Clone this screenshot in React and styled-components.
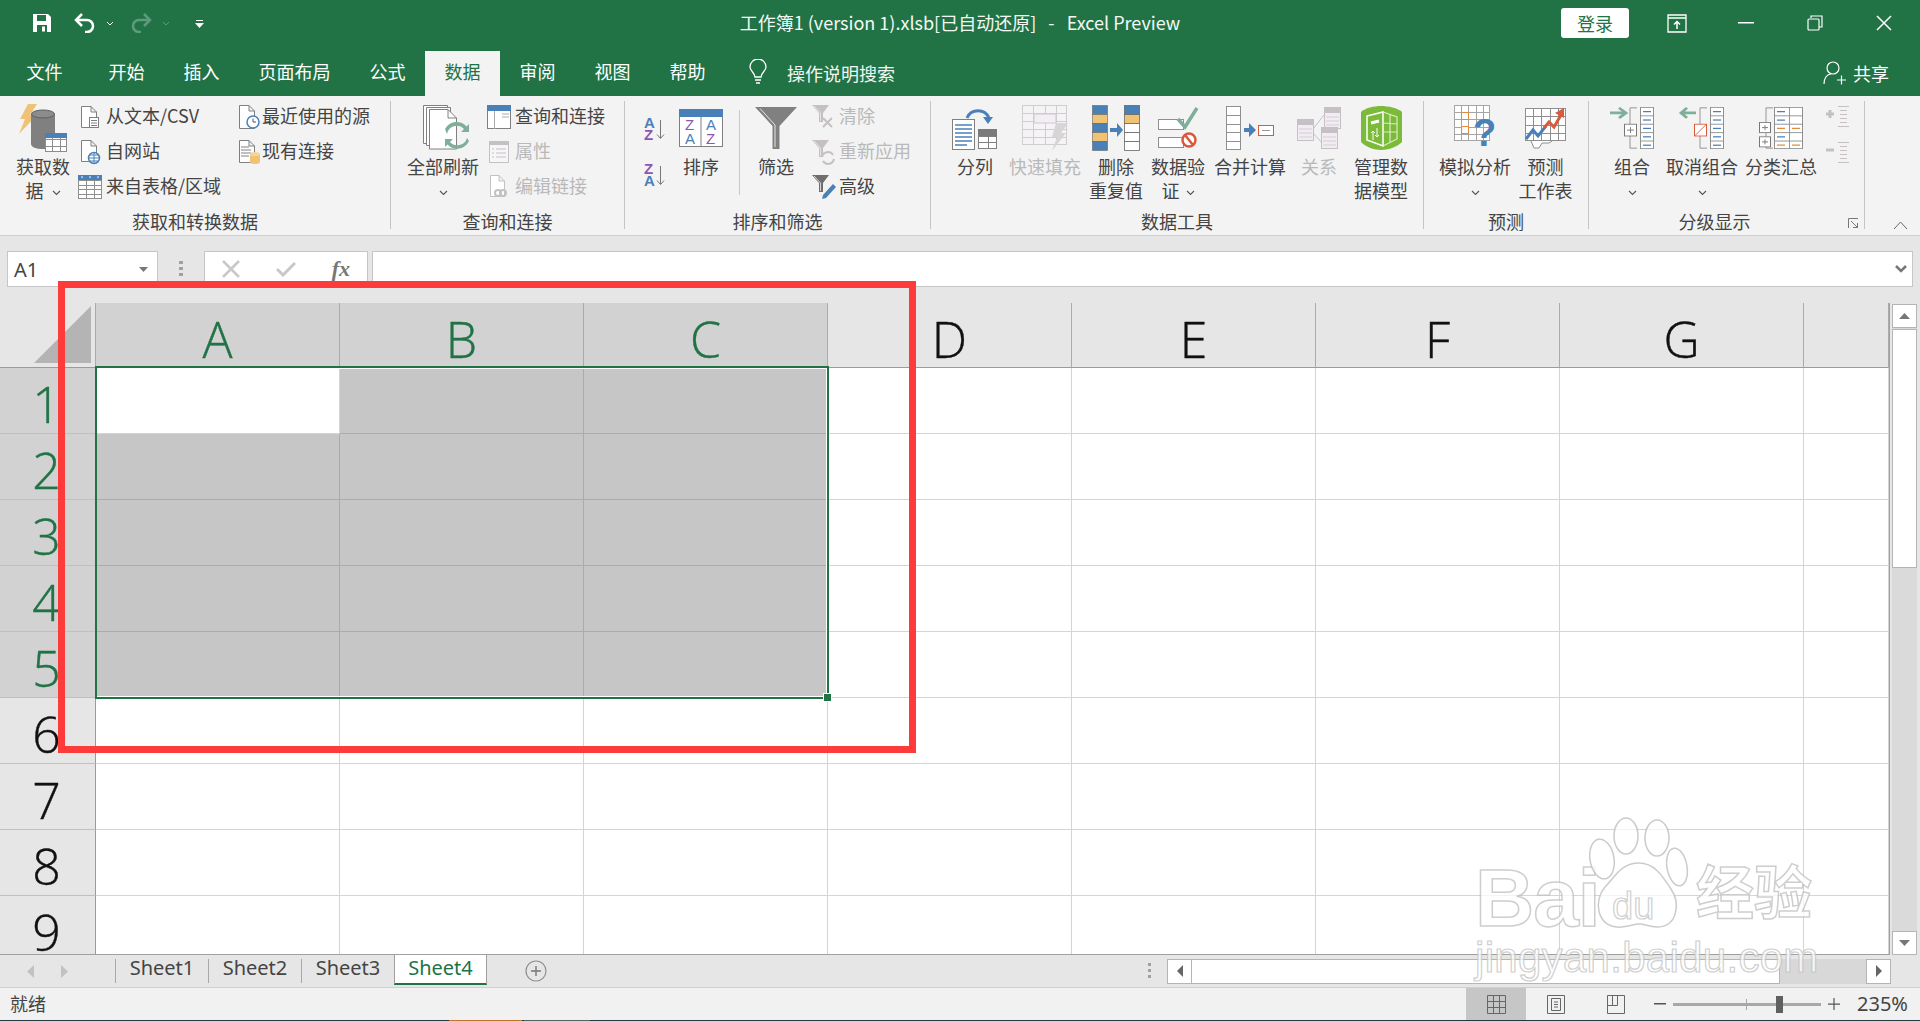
import React from "react";
import styled, { createGlobalStyle } from "styled-components";

const GlobalStyle = createGlobalStyle`
  html, body { margin: 0; padding: 0; height: 100%; overflow: hidden; }
  body { font-family: "Noto Sans CJK SC", "Noto Sans", sans-serif; }
  * { box-sizing: border-box; }
`;

const GREEN = "#217346";
const BLUE = "#4a80b8";
const TAN = "#efc275";
const PURPLE = "#8e55ad";
const TEAL = "#7fae9b";
const GRAY = "#808080";
const RED = "#d9593c";
const OFF = "#c4c0c4";

const AppWindow = styled.div`
  position: relative;
  width: 100vw;
  height: 100vh;
  overflow: hidden;
  display: flex;
  flex-direction: column;
  background: #e6e6e6;
`;

/* title bar */
const TitleBar = styled.div`
  height: 51px;
  padding-bottom: 5px;
  background: ${GREEN};
  display: grid;
  grid-template-columns: 1fr auto 1fr;
  align-items: center;
  color: #fff;
`;
const Quick = styled.div`
  display: flex;
  align-items: center;
  padding-left: 32px;
`;
const QuickGap = styled.span`
  display: inline-flex;
  margin-left: ${(p) => p.$m}px;
`;
const Title = styled.div`
  font-size: 18px;
  line-height: 26px;
  margin-top: -2px;
  white-space: pre;
  color: #f4f8f5;
`;
const WinButtons = styled.div`
  display: flex;
  align-items: center;
  justify-content: flex-end;
  padding-right: 2px;
`;
const Login = styled.div`
  width: 68px;
  height: 30px;
  background: #fff;
  border-radius: 3px;
  color: ${GREEN};
  font-size: 18px;
  line-height: 30px;
  text-align: center;
  margin-right: 13px;
`;
const WinBtn = styled.div`
  width: 69px;
  display: flex;
  justify-content: center;
`;

/* tabs */
const TabRow = styled.div`
  height: 45px;
  background: ${GREEN};
  display: flex;
  align-items: flex-end;
  padding-left: 7px;
`;
const Tab = styled.div`
  height: 45px;
  padding: 0 19.5px;
  margin-right: ${(p) => p.$mr || 0}px;
  font-size: 18px;
  line-height: 41px;
  color: ${(p) => (p.$active ? GREEN : "#fff")};
  background: ${(p) => (p.$active ? "#f3f3f3" : "transparent")};
  white-space: nowrap;
`;
const TellMe = styled.div`
  display: flex;
  align-items: center;
  height: 43px;
  margin-left: 23.5px;
  margin-bottom: 2px;
  color: #f2f6f3;
  font-size: 18px;
  gap: 20.5px;
`;
const Share = styled.div`
  margin-left: auto;
  padding-right: 31px;
  display: flex;
  align-items: center;
  height: 43px;
  margin-bottom: 2px;
  gap: 7px;
  color: #fff;
  font-size: 18px;
`;

/* ribbon */
const Ribbon = styled.div`
  position: relative;
  height: 140px;
  background: #f3f3f3;
  border-bottom: 1px solid #d0d0d0;
  display: flex;
  align-items: flex-start;
  padding-top: 5px;
  color: #444;
`;
const Group = styled.div`
  width: ${(p) => p.$w}px;
  height: 128px;
  border-right: 1px solid #c4c4c4;
  display: flex;
  flex-direction: column;
`;
const GroupBody = styled.div`
  height: 109px;
  display: flex;
  align-items: flex-start;
  padding-left: ${(p) => p.$pl || 0}px;
`;
const GroupLabel = styled.div`
  height: 19px;
  line-height: 22px;
  font-size: 18px;
  text-align: center;
  color: #444;
  padding-right: ${(p) => p.$pr || 0}px;
`;
const BigButton = styled.div`
  width: ${(p) => p.$w}px;
  margin-left: ${(p) => p.$ml || 0}px;
  flex: none;
  display: flex;
  flex-direction: column;
  align-items: center;
  color: ${(p) => (p.$off ? "#b9b9b9" : "#444")};
`;
const IconSlot = styled.div`
  height: 50px;
  margin-top: 2px;
  padding-left: ${(p) => p.$pl || 0}px;
  display: flex;
  align-items: center;
  justify-content: center;
`;
const BigText = styled.div`
  margin-top: 0.5px;
  font-size: 18px;
  line-height: 24px;
  text-align: center;
  white-space: nowrap;
`;
const Chevron = styled.span`
  display: inline-flex;
  vertical-align: middle;
  margin-left: ${(p) => p.$ml || 0}px;
`;
const SmallCol = styled.div`
  width: ${(p) => (p.$w ? `${p.$w}px` : "auto")};
  margin-left: ${(p) => p.$ml || 0}px;
  margin-top: -2px;
  display: flex;
  flex-direction: column;
  flex: none;
`;
const SmallRow = styled.div`
  height: 35px;
  display: flex;
  align-items: center;
  font-size: 18px;
  line-height: 32px;
  padding-bottom: 3px;
  white-space: nowrap;
  color: ${(p) => (p.$off ? "#b9b9b9" : "#444")};
`;
const SmallIcon = styled.span`
  width: ${(p) => p.$w || 24}px;
  margin-right: ${(p) => (p.$mr === undefined ? 4 : p.$mr)}px;
  margin-top: 3px;
  display: flex;
  justify-content: center;
`;
const SortCol = styled.div`
  width: 21px;
  margin-top: 16px;
  display: flex;
  flex-direction: column;
  gap: 22px;
  flex: none;
`;
const InnerSep = styled.div`
  width: 1px;
  height: 85px;
  margin: 9px 0 0 ${(p) => p.$ml}px;
  background: #c9c9c9;
  flex: none;
`;
const TinyCol = styled.div`
  margin: 5px 0 0 ${(p) => p.$ml}px;
  display: flex;
  flex-direction: column;
  gap: 15px;
  flex: none;
`;
const Launcher = styled.span`
  position: absolute;
  left: 1848px;
  top: 122px;
  display: flex;
`;
const Collapse = styled.span`
  position: absolute;
  left: 1893px;
  top: 125px;
  display: flex;
`;

/* formula bar */
const FormulaBar = styled.div`
  height: 67px;
  padding: 15px 7px 0 7px;
  display: flex;
  align-items: flex-start;
  background: #e6e6e6;
`;
const NameBox = styled.div`
  width: 151px;
  height: 36px;
  background: #fff;
  border: 1px solid #c6c6c6;
  display: flex;
  align-items: center;
  justify-content: space-between;
  padding: 0 9px 0 6px;
  font-size: 20px;
  font-family: "Noto Sans", sans-serif;
  color: #444;
`;
const Dots = styled.div`
  width: 46px;
  height: 36px;
  display: flex;
  justify-content: center;
  align-items: center;
`;
const FxBox = styled.div`
  width: 164px;
  height: 36px;
  background: #fff;
  border: 1px solid #c6c6c6;
  display: flex;
  align-items: center;
  justify-content: space-between;
  padding: 0 17px;
`;
const FxLabel = styled.span`
  font-family: "Liberation Serif", serif;
  font-style: italic;
  font-weight: 700;
  font-size: 22px;
  color: #777;
`;
const FormulaInput = styled.div`
  flex: 1;
  height: 36px;
  margin-left: 4px;
  background: #fff;
  border: 1px solid #c6c6c6;
  display: flex;
  align-items: center;
  justify-content: flex-end;
  padding-right: 5px;
`;

/* sheet */
const SheetRow = styled.div`
  height: 652px;
  display: flex;
`;
const SheetWrap = styled.div`
  position: relative;
  width: 1890px;
  height: 652px;
  overflow: hidden;
  border-right: 1px solid #a0a0a0;
  border-bottom: 1px solid #a0a0a0;
`;
const SheetGrid = styled.div`
  display: grid;
  grid-template-columns: 96px repeat(7, 244px) 1fr;
  grid-template-rows: 65px repeat(9, 66px);
`;
const Corner = styled.div`
  position: relative;
  border-right: 1px solid #ababab;
  border-bottom: 1px solid #9b9b9b;
  &::after {
    content: "";
    position: absolute;
    right: 4px;
    bottom: 4px;
    width: 0;
    height: 0;
    border-left: 57px solid transparent;
    border-bottom: 57px solid #b4b4b4;
  }
`;
const ColHead = styled.div`
  background: ${(p) => (p.$sel ? "#d2d2d2" : "#e6e6e6")};
  border-right: 1px solid #ababab;
  border-bottom: 1px solid #9b9b9b;
  color: ${(p) => (p.$sel ? GREEN : "#111")};
  font-family: "Open Sans", sans-serif;
  font-weight: 300;
  font-size: 50px;
  line-height: 72px;
  text-align: center;
  -webkit-text-stroke: 0.4px currentColor;
`;
const RowHead = styled.div`
  background: ${(p) => (p.$sel ? "#d2d2d2" : "#e6e6e6")};
  border-right: 1px solid #9b9b9b;
  border-bottom: 1px solid #c0c0c0;
  color: ${(p) => (p.$sel ? GREEN : "#111")};
  font-family: "Open Sans", sans-serif;
  font-weight: 300;
  font-size: 50px;
  line-height: 72px;
  text-align: center;
  padding-right: 2px;
  -webkit-text-stroke: 0.4px currentColor;
`;
const Cell = styled.div`
  background: ${(p) => (p.$sel ? "#c6c6c6" : "#fff")};
  border-right: 1px solid ${(p) => (p.$sel ? "#ababab" : "#d4d4d4")};
  border-bottom: 1px solid ${(p) => (p.$sel ? "#ababab" : "#d4d4d4")};
`;
const Selection = styled.div`
  position: absolute;
  left: 95px;
  top: 63px;
  width: 734px;
  height: 333px;
  border: 2px solid ${GREEN};
  box-shadow: inset -1px -1px 0 #fff, inset 0 1px 0 #fff;
`;
const Handle = styled.div`
  position: absolute;
  right: -5px;
  bottom: -5px;
  width: 9px;
  height: 9px;
  background: ${GREEN};
  border: 1px solid #fff;
`;
const VScroll = styled.div`
  flex: 1;
  padding: 1px 3px 0 2px;
  display: flex;
  flex-direction: column;
`;
const ScrollBtn = styled.div`
  height: 24px;
  background: #fff;
  border: 1px solid #b5b5b5;
  display: flex;
  align-items: center;
  justify-content: center;
  flex: none;
`;
const VTrack = styled.div`
  flex: 1;
  background: #dadada;
  padding-top: 1px;
`;
const VThumb = styled.div`
  height: 239px;
  background: #fff;
  border: 1px solid #b5b5b5;
`;

/* sheet tabs */
const TabsBar = styled.div`
  height: 33px;
  display: flex;
  align-items: flex-start;
  border-bottom: 1px solid #cfcfcf;
  background: #e6e6e6;
`;
const TabNav = styled.div`
  width: 115px;
  height: 32px;
  padding-left: 27px;
  display: flex;
  align-items: center;
  gap: 27px;
`;
const SheetTab = styled.div`
  width: ${(p) => p.$w}px;
  height: ${(p) => (p.$active ? 30 : 24)}px;
  margin-top: ${(p) => (p.$active ? 0 : 4)}px;
  font-family: "Noto Sans", sans-serif;
  font-size: 20px;
  line-height: ${(p) => (p.$active ? 26 : 18)}px;
  text-align: center;
  color: ${(p) => (p.$active ? GREEN : "#444")};
  background: ${(p) => (p.$active ? "#fff" : "transparent")};
  border-left: ${(p) => (p.$active ? "1px solid #a0a0a0" : "1px solid #a8a8a8")};
  border-right: ${(p) => (p.$active ? "1px solid #a0a0a0" : "none")};
  border-bottom: ${(p) => (p.$active ? `2px solid ${GREEN}` : "none")};
`;
const AddSheet = styled.div`
  margin: 5px 0 0 38px;
  display: flex;
`;
const HScrollWrap = styled.div`
  margin-left: auto;
  display: flex;
  align-items: center;
  height: 26px;
  margin-top: 3px;
  margin-right: 29px;
`;
const HDots = styled.div`
  margin-right: 16px;
  display: flex;
`;
const HBtn = styled.div`
  width: 25px;
  height: 25px;
  background: #fff;
  border: 1px solid #b5b5b5;
  display: flex;
  align-items: center;
  justify-content: center;
`;
const HTrack = styled.div`
  width: 674px;
  height: 25px;
  background: #d8d8d8;
`;
const HThumb = styled.div`
  width: 588px;
  height: 25px;
  background: #fff;
  border: 1px solid #b5b5b5;
  border-left: none;
`;

/* status bar */
const StatusBar = styled.div`
  flex: 1;
  display: flex;
  align-items: stretch;
  background: #f1f1f1;
  color: #444;
  font-size: 18px;
  line-height: 30px;
  padding-left: 10px;
`;
const ViewBtn = styled.div`
  width: 60px;
  display: flex;
  align-items: center;
  justify-content: center;
  background: ${(p) => (p.$active ? "#c6c6c6" : "transparent")};
`;
const Views = styled.div`
  margin-left: auto;
  display: flex;
`;
const Zoomer = styled.div`
  display: flex;
  align-items: center;
  margin-left: 8px;
  margin-right: 12px;
`;
const SliderTrack = styled.div`
  position: relative;
  width: 148px;
  height: 3px;
  margin: 0 7px;
  background: #a8a8a8;
`;
const SliderTick = styled.div`
  position: absolute;
  left: 73px;
  top: -4px;
  width: 1px;
  height: 11px;
  background: #a8a8a8;
`;
const SliderThumb = styled.div`
  position: absolute;
  left: 103px;
  top: -7px;
  width: 7px;
  height: 17px;
  background: #5f5f5f;
`;
const Percent = styled.span`
  margin-left: 17px;
  font-family: "Noto Sans", sans-serif;
  font-size: 20px;
  color: #444;
`;
const TaskStrip = styled.div`
  height: 1px;
  flex: none;
  display: flex;
  background: #1f3a44;
`;
const TaskSeg = styled.div`
  width: ${(p) => p.$w}px;
  margin-left: ${(p) => p.$ml}px;
  background: ${(p) => p.$c};
`;

/* overlays */
const RedFrame = styled.div`
  position: absolute;
  left: 58px;
  top: 281px;
  width: 858px;
  height: 472px;
  border: 7px solid #fd3b3b;
  pointer-events: none;
`;
const Watermark = styled.div`
  position: absolute;
  left: 1475px;
  top: 815px;
  width: 345px;
  height: 170px;
  pointer-events: none;
`;
const WmBig = styled.span`
  position: absolute;
  left: ${(p) => p.$x}px;
  top: ${(p) => p.$y}px;
  font-family: "Liberation Sans", "Noto Sans CJK SC", sans-serif;
  font-weight: 700;
  font-size: ${(p) => p.$s}px;
  line-height: 1;
  letter-spacing: ${(p) => p.$ls || 0}px;
  white-space: nowrap;
  color: rgba(255, 255, 255, 0.72);
  -webkit-text-stroke: 1.5px rgba(190, 190, 190, 0.75);
`;
const WmThin = styled(WmBig)`
  font-weight: 400;
  -webkit-text-stroke: 1.2px rgba(190, 190, 190, 0.75);
`;
const WmPaw = styled.svg`
  position: absolute;
  left: 114px;
  top: 2px;
`;

/* icon drawing helpers */
const Ico = ({ w, h, vh, children }) => (
  <svg width={w} height={h} viewBox={`0 0 ${w} ${vh || h}`} preserveAspectRatio="none" fill="none" overflow="visible">
    {children}
  </svg>
);

const Page = ({ x = 0, y = 0, w = 16, h = 21, c = GRAY, fill = "#fff" }) => (
  <path
    d={`M${x + 0.5} ${y + 0.5}H${x + w - 6}L${x + w - 0.5} ${y + 6}V${y + h - 0.5}H${x + 0.5}ZM${x + w - 6} ${y + 0.5}V${y + 6}H${x + w - 0.5}`}
    fill={fill}
    stroke={c}
  />
);

const Grid = ({ x = 0, y = 0, w, h, cols, rows, c = GRAY, fill = "#fff", head }) => {
  const lines = [];
  for (let i = 1; i < cols; i++) {
    const px = x + Math.round((w * i) / cols) + 0.5;
    lines.push(`M${px} ${y}V${y + h}`);
  }
  for (let i = 1; i < rows; i++) {
    const py = y + Math.round((h * i) / rows) + 0.5;
    lines.push(`M${x} ${py}H${x + w}`);
  }
  return (
    <>
      <rect x={x + 0.5} y={y + 0.5} width={w - 1} height={h - 1} fill={fill} stroke={c} />
      <path d={lines.join("")} stroke={c} />
      {head && <rect x={x} y={y} width={w} height={Math.round(h / rows)} fill={head} />}
    </>
  );
};

const SmallChev = ({ ml }) => (
  <Chevron $ml={ml}>
    <svg width="9" height="6" viewBox="0 0 9 6" fill="none">
      <path d="M1 1l3.5 3.5L8 1" stroke="#555" strokeWidth="1.1" />
    </svg>
  </Chevron>
);

const IconGetData = () => (
  <Ico w={48} h={48}>
    <path d="M9 0h9l-7 11h7L0 30l6-15H1z" fill={TAN} />
    <path d="M12 10v30c0 3 5 5 12 5s12-2 12-5V10z" fill={GRAY} />
    <ellipse cx="24" cy="10" rx="11.5" ry="4" fill="#8c8c8c" stroke="#5f5f5f" />
    <Grid x={26} y={29} w={22} h={19} cols={3} rows={3} c="#8c8c8c" />
    <rect x="26" y="29" width="22" height="5" fill={BLUE} />
  </Ico>
);
const IconFromText = () => (
  <Ico w={24} h={22}>
    <Page x={3} y={0} w={16} h={22} />
    <rect x="11.5" y="11.5" width="9" height="10" fill="#fff" stroke={GRAY} />
    <path d="M13 14.5h6M13 17h6M13 19.5h6" stroke={GRAY} />
  </Ico>
);
const IconWeb = () => (
  <Ico w={24} h={24}>
    <Page x={3} y={0} w={16} h={22} />
    <circle cx="16" cy="18" r="5.5" fill="#fff" stroke={BLUE} strokeWidth="1.5" />
    <path d="M10.5 18h11M16 12.5v11M12 15h8M12 21h8" stroke={BLUE} />
  </Ico>
);
const IconTable = () => (
  <Ico w={24} h={24}>
    <Grid x={0} y={0} w={24} h={24} cols={3} rows={5} c="#8f8f8f" />
    <rect width="24" height="5" fill={BLUE} />
    <path d="M3 1.5l1 2 1-2zM11 1.5l1 2 1-2zM19 1.5l1 2 1-2z" fill="#fff" />
  </Ico>
);
const IconRecent = () => (
  <Ico w={24} h={24}>
    <Page x={1} y={0} w={16} h={24} />
    <circle cx="15" cy="17" r="6" fill="#fff" stroke={BLUE} strokeWidth="1.5" />
    <path d="M15 13.5V17h3" stroke="#555" />
  </Ico>
);
const IconExisting = () => (
  <Ico w={24} h={24}>
    <Page x={1} y={0} w={16} h={23} />
    <path d="M3 7h8M3 10h10M3 13h10M3 16h8" stroke={GRAY} />
    <path d="M12 14v8c0 1 2 2 5 2s5-1 5-2v-8z" fill={TAN} />
    <ellipse cx="17" cy="14" rx="5" ry="2" fill="#f4d69c" />
  </Ico>
);
const IconRefreshAll = () => (
  <Ico w={46} h={46}>
    <path d="M.5 .5h24v38H.5z" fill="#fff" stroke={GRAY} />
    <path d="M3.5 2.5h24v38h-24z" fill="#fff" stroke={GRAY} />
    <path d="M6.5 4.5H25L33.5 13v31h-27z" fill="#fff" stroke={GRAY} />
    <path d="M25 4.5V13h8.5" stroke={GRAY} />
    <path d="M24 29a10 10 0 0 1 17-5l-3 3h8v-8l-2.500 2.500A13 13 0 0 0 22 24z" fill={TEAL} />
    <path d="M44 33a10 10 0 0 1-17 4l3-3h-8v8l2.500-2.500A13 13 0 0 0 46 36z" fill={TEAL} />
  </Ico>
);
const IconWindow = () => (
  <Ico w={24} h={24}>
    <rect x=".5" y=".5" width="23" height="23" fill="#fff" stroke={GRAY} />
    <rect width="24" height="6" fill={BLUE} />
    <path d="M7.500 6v18M15 9h7M15 12h7" stroke="#aaa" />
  </Ico>
);
const IconProps = () => (
  <Ico w={20} h={22}>
    <rect x=".5" y=".5" width="19" height="21" fill="#f6f6f6" stroke={OFF} />
    <rect width="20" height="4" fill={OFF} />
    <path d="M3 8h2M3 12h2M3 16h2M7 8h10M7 12h10M7 16h10" stroke={OFF} />
  </Ico>
);
const IconEditLinks = () => (
  <Ico w={20} h={24}>
    <Page x={1} y={0} w={15} h={22} c={OFF} />
    <circle cx="9" cy="18" r="3" fill="none" stroke={OFF} strokeWidth="2" />
    <circle cx="14" cy="18" r="3" fill="none" stroke={OFF} strokeWidth="2" />
  </Ico>
);
const SortLetters = ({ top, bottom, tc, bc }) => (
  <Ico w={21} h={24}>
    <text x="0" y="11" fontSize="15" fontWeight="700" fontFamily="Liberation Sans" fill={tc}>{top}</text>
    <text x="0" y="23" fontSize="15" fontWeight="700" fontFamily="Liberation Sans" fill={bc}>{bottom}</text>
    <path d="M16.500 3v18M13 17.500l3.500 4 3.500-4" stroke="#777" />
  </Ico>
);
const IconSort = () => (
  <Ico w={44} h={38}>
    <rect x=".5" y=".5" width="43" height="37" fill="#fff" stroke={GRAY} />
    <rect width="44" height="8" fill={BLUE} />
    <path d="M22 8v30" stroke={GRAY} />
    <text x="6" y="21" fontSize="15" fontFamily="Liberation Sans" fill={PURPLE}>Z</text>
    <text x="6" y="35" fontSize="15" fontFamily="Liberation Sans" fill={BLUE}>A</text>
    <text x="27" y="21" fontSize="15" fontFamily="Liberation Sans" fill={BLUE}>A</text>
    <text x="27" y="35" fontSize="15" fontFamily="Liberation Sans" fill={PURPLE}>Z</text>
  </Ico>
);
const IconFunnel = () => (
  <Ico w={42} h={42}>
    <path d="M0 0h42L24.500 19v23h-7V19z" fill={GRAY} />
    <path d="M5 1.500L20 18v22" stroke="#e6e6e6" strokeWidth="1" />
  </Ico>
);
const TinyFunnel = ({ c, children }) => (
  <Ico w={24} h={24}>
    <path d="M0 0h17L11 8v9H7V8z" fill={c} />
    <path d="M2 1l6.500 7v8" stroke="#eee" strokeWidth=".8" />
    {children}
  </Ico>
);
const IconClear = () => (
  <TinyFunnel c={OFF}>
    <path d="M11 13l9 9M20 13l-9 9" stroke={OFF} strokeWidth="2" />
  </TinyFunnel>
);
const IconReapply = () => (
  <TinyFunnel c={OFF}>
    <path d="M10 17a6 6 0 0 1 11-2M22 19a6 6 0 0 1-11 2" stroke={OFF} strokeWidth="2" />
  </TinyFunnel>
);
const IconAdvanced = () => (
  <TinyFunnel c="#6f6f6f">
    <path d="M21 9l3 3-10 11-4 1 1-4z" fill={BLUE} />
  </TinyFunnel>
);
const IconTextToCols = () => (
  <Ico w={46} h={46}>
    <path d="M15 13a12 12 0 0 1 22 0" stroke={BLUE} strokeWidth="3" />
    <path d="M31 12h10l-5 7z" fill={BLUE} />
    <rect x=".5" y="14.500" width="22" height="30" fill="#fff" stroke={GRAY} />
    <path d="M3 20h17M3 24h17M3 28h17M3 32h17M3 36h17M3 40h12" stroke={BLUE} strokeWidth="1.4" />
    <Grid x={26} y={24} w={19} h={20} cols={2} rows={3} c={GRAY} />
    <rect x="26" y="24" width="19" height="7" fill="#7b7b7b" />
  </Ico>
);
const IconFlash = () => (
  <Ico w={46} h={46}>
    <Grid x={0} y={0} w={45} h={40} cols={4} rows={5} c="#d0ccd0" fill="#f6f3f6" />
    <rect x="12" y="9" width="22" height="9" fill="#f3eef3" stroke="#cdc8cd" />
    <path d="M34 18h12l-7 10h5L30 46l5-14h-5z" fill="#d6d6d6" />
  </Ico>
);
const IconDupes = () => {
  const cols = [BLUE, TAN, BLUE, TAN, BLUE];
  const right = [BLUE, TAN, "#fff", "#fff", "#fff"];
  return (
    <Ico w={48} h={46}>
      {cols.map((c, i) => (
        <rect key={i} x="0.500" y={i * 9 + 0.5} width="15" height="9" fill={c} stroke="#666" strokeWidth=".6" />
      ))}
      {right.map((c, i) => (
        <rect key={i} x="32.500" y={i * 9 + 0.5} width="15" height="9" fill={c} stroke="#666" strokeWidth=".8" />
      ))}
      <path d="M18 23h7v-5l6 7-6 7v-5h-7z" fill={BLUE} />
    </Ico>
  );
};
const IconValidate = () => (
  <Ico w={41} h={42}>
    <rect x=".5" y="12.500" width="25" height="10" fill="#fff" stroke="#8f8f8f" />
    <rect x=".5" y="30.500" width="25" height="10" fill="#fff" stroke="#8f8f8f" />
    <path d="M20 12l7 8L39 1" stroke={TEAL} strokeWidth="3.500" />
    <circle cx="31" cy="33" r="6.500" fill="#fff" stroke={RED} strokeWidth="2.500" />
    <path d="M27 28l8 10" stroke={RED} strokeWidth="2.500" />
  </Ico>
);
const IconConsolidate = () => (
  <Ico w={48} h={44}>
    <Grid x={0} y={0} w={15} h={44} cols={1} rows={5} c="#8f8f8f" />
    <path d="M18 22h5v-5l7 7-7 7v-5h-5z" fill={BLUE} />
    <rect x="32.500" y="19.500" width="15" height="10" fill="#fff" stroke={RED} />
    <path d="M36 24.500h8" stroke="#999" />
  </Ico>
);
const SmallTable = ({ x, y }) => (
  <>
    <rect x={x + 0.5} y={y + 0.5} width="16" height="21" fill="#f1ecf1" stroke={OFF} />
    <rect x={x} y={y} width="17" height="6" fill={OFF} />
    <path d={`M${x + 2} ${y + 10}h13M${x + 2} ${y + 14}h13M${x + 2} ${y + 18}h13`} stroke="#d5cfd5" />
  </>
);
const IconRelations = () => (
  <Ico w={44} h={42}>
    <path d="M16 22L27 8M16 26l10 11" stroke={OFF} />
    <SmallTable x={0} y={12} />
    <SmallTable x={27} y={0} />
    <SmallTable x={24} y={20} />
  </Ico>
);
const IconModel = () => (
  <Ico w={41} h={44}>
    <path d="M0 6c4-4 13-6 20-6s17 2 21 6v30c-4 4-12 8-21 8S4 40 0 36z" fill="#7cbb39" />
    <path d="M6 10l16-4v34L6 34z" fill="none" stroke="#fff" strokeWidth="1.500" />
    <path d="M22 6l14 5v22l-14 7M22 17l14 1M22 26l14 0M29 9v27" stroke="#d9ecc4" strokeWidth="1.200" />
    <path d="M10 17l8-2" stroke="#fff" strokeWidth="3" />
    <path d="M12 34v-9l-2 2M12 25l2 2M16 22v9l2-2M16 31l-2-2" stroke="#fff" />
  </Ico>
);
const IconWhatIf = () => (
  <Ico w={43} h={46}>
    <Grid x={0} y={0} w={36} h={36} cols={5} rows={5} c="#a5a5a5" />
    <rect x="7.500" y="7.500" width="7" height="7" fill="#fff" stroke="#e38a3c" />
    <rect x="7.500" y="21.500" width="7" height="7" fill="#fff" stroke="#e38a3c" />
    <text x="19" y="41" fontSize="38" fontWeight="700" fontFamily="Liberation Sans" fill={BLUE}>?</text>
  </Ico>
);
const IconForecast = () => (
  <Ico w={41} h={42}>
    <Grid x={0} y={1} w={41} h={33} cols={5} rows={4} c="#8f8f8f" />
    <path d="M6 34l3 7h5l3-5h7l3-2" stroke="#8f8f8f" fill="#fff" />
    <path d="M1 32l7-9 5 6 8-10" stroke={BLUE} strokeWidth="3" />
    <path d="M19 21l5-6 5 5 7-12" stroke={RED} strokeWidth="3" />
    <path d="M30 6l9-5v10z" fill={RED} />
  </Ico>
);
const OutlineList = ({ x, dash = BLUE }) => (
  <>
    <Grid x={x} y={0} w={14} h={50} cols={1} rows={5} c="#8f8f8f" />
    {[0, 1, 2, 3, 4].map((i) => (
      <path key={i} d={`M${x + 3} ${i * 10 + 5.5}h8`} stroke={dash} strokeWidth="1.500" />
    ))}
  </>
);
const IconGroup = () => (
  <Ico w={44} h={42} vh={50}>
    <path d="M0 7h15M9 1l7 6-7 6" stroke={TEAL} strokeWidth="3" />
    <path d="M27 1h-7v48h7" stroke="#8f8f8f" />
    <rect x="14.500" y="20.500" width="12" height="14" fill="#fff" stroke="#777" />
    <path d="M17 27.500h7M20.500 24v7" stroke="#777" />
    <OutlineList x={30} />
  </Ico>
);
const IconUngroup = () => (
  <Ico w={44} h={42} vh={50}>
    <path d="M16 7H1M7 1L1 7l6 6" stroke={TEAL} strokeWidth="3" />
    <path d="M27 1h-7v48h7" stroke="#8f8f8f" />
    <rect x="14.500" y="20.500" width="12" height="14" fill="#fff" stroke={RED} />
    <path d="M15 34l11-13" stroke={RED} />
    <OutlineList x={30} />
  </Ico>
);
const IconSubtotal = () => (
  <Ico w={44} h={42} vh={50}>
    <path d="M14 1H7v48h7" stroke="#8f8f8f" />
    <rect x=".5" y="18.500" width="11" height="12" fill="#fff" stroke="#777" />
    <path d="M3 24.500h6M6 21.500v6" stroke="#777" />
    <rect x=".5" y="35.500" width="11" height="12" fill="#fff" stroke="#777" />
    <path d="M3 41.500h6M6 38.500v6" stroke="#777" />
    <Grid x={15} y={0} w={29} h={50} cols={2} rows={5} c="#8f8f8f" />
    <path d="M18 5.500h8M18 15.500h8M18 35.500h8" stroke={BLUE} strokeWidth="1.500" />
    <path d="M18 25.500h8M33 25.500h8M18 45.500h8M33 45.500h8" stroke="#e38a3c" strokeWidth="1.500" />
  </Ico>
);
const IconShowDetail = ({ minus }) => (
  <Ico w={23} h={21}>
    <path d="M0 8h8" stroke={OFF} strokeWidth="3" />
    {!minus && <path d="M4 4v8" stroke={OFF} strokeWidth="3" />}
    <path d="M12 .5h11M14 4.500h7M14 8.500h7M14 12.500h7M14 16.500h7M12 20.500h11" stroke={OFF} />
  </Ico>
);

const dataTools = [
  { w: 70, icon: <IconTextToCols />, text: ["分列"] },
  { w: 70, off: true, icon: <IconFlash />, text: ["快速填充"] },
  { w: 72, icon: <IconDupes />, text: ["删除", "重复值"] },
  { w: 52, icon: <IconValidate />, text: ["数据验", "证"], chev: true },
  { w: 92, icon: <IconConsolidate />, text: ["合并计算"] },
  { w: 46, off: true, icon: <IconRelations />, text: ["关系"] },
  { w: 78, icon: <IconModel />, text: ["管理数", "据模型"] },
];

const columns = ["A", "B", "C", "D", "E", "F", "G", ""];
const rowNumbers = [1, 2, 3, 4, 5, 6, 7, 8, 9];

const isSelected = (r, c) => r <= 5 && c <= 2 && !(r === 1 && c === 0);

const Sheet = () => (
  <SheetWrap>
    <SheetGrid>
      <Corner />
      {columns.map((c, i) => (
        <ColHead key={i} $sel={i < 3}>
          {c}
        </ColHead>
      ))}
      {rowNumbers.map((r) => (
        <React.Fragment key={r}>
          <RowHead $sel={r <= 5}>{r}</RowHead>
          {columns.map((c, i) => (
            <Cell key={i} $sel={isSelected(r, i)} />
          ))}
        </React.Fragment>
      ))}
    </SheetGrid>
    <Selection>
      <Handle />
    </Selection>
  </SheetWrap>
);

const Ribbons = () => (
  <Ribbon>
    <Group $w={391}>
      <GroupBody $pl={16}>
        <BigButton $w={54}>
          <IconSlot>
            <IconGetData />
          </IconSlot>
          <BigText>
            获取数
            <br />据<SmallChev ml={8} />
          </BigText>
        </BigButton>
        <SmallCol $ml={8} $w={160}>
          <SmallRow><SmallIcon><IconFromText /></SmallIcon>从文本/CSV</SmallRow>
          <SmallRow><SmallIcon><IconWeb /></SmallIcon>自网站</SmallRow>
          <SmallRow><SmallIcon><IconTable /></SmallIcon>来自表格/区域</SmallRow>
        </SmallCol>
        <SmallCol>
          <SmallRow><SmallIcon $mr={0}><IconRecent /></SmallIcon>最近使用的源</SmallRow>
          <SmallRow><SmallIcon $mr={0}><IconExisting /></SmallIcon>现有连接</SmallRow>
        </SmallCol>
      </GroupBody>
      <GroupLabel>获取和转换数据</GroupLabel>
    </Group>

    <Group $w={234}>
      <GroupBody $pl={16}>
        <BigButton $w={72}>
          <IconSlot $pl={5}>
            <IconRefreshAll />
          </IconSlot>
          <BigText>
            全部刷新
            <br />
            <SmallChev />
          </BigText>
        </BigButton>
        <SmallCol $ml={8}>
          <SmallRow><SmallIcon><IconWindow /></SmallIcon>查询和连接</SmallRow>
          <SmallRow $off><SmallIcon><IconProps /></SmallIcon>属性</SmallRow>
          <SmallRow $off><SmallIcon><IconEditLinks /></SmallIcon>编辑链接</SmallRow>
        </SmallCol>
      </GroupBody>
      <GroupLabel>查询和连接</GroupLabel>
    </Group>

    <Group $w={306}>
      <GroupBody $pl={19}>
        <SortCol>
          <SortLetters top="A" bottom="Z" tc={BLUE} bc={PURPLE} />
          <SortLetters top="Z" bottom="A" tc={PURPLE} bc={BLUE} />
        </SortCol>
        <BigButton $w={54} $ml={9}>
          <IconSlot>
            <IconSort />
          </IconSlot>
          <BigText>排序</BigText>
        </BigButton>
        <InnerSep $ml={11} />
        <BigButton $w={60} $ml={6}>
          <IconSlot>
            <IconFunnel />
          </IconSlot>
          <BigText>筛选</BigText>
        </BigButton>
        <SmallCol $ml={6}>
          <SmallRow $off><SmallIcon $mr={3}><IconClear /></SmallIcon>清除</SmallRow>
          <SmallRow $off><SmallIcon $mr={3}><IconReapply /></SmallIcon>重新应用</SmallRow>
          <SmallRow><SmallIcon $mr={3}><IconAdvanced /></SmallIcon>高级</SmallRow>
        </SmallCol>
      </GroupBody>
      <GroupLabel>排序和筛选</GroupLabel>
    </Group>

    <Group $w={493}>
      <GroupBody $pl={9}>
        {dataTools.map((b) => (
          <BigButton key={b.text[0]} $w={b.w} $off={b.off}>
            <IconSlot>{b.icon}</IconSlot>
            <BigText>
              {b.text[0]}
              {b.text[1] && <br />}
              {b.text[1]}
              {b.chev && <SmallChev ml={6} />}
            </BigText>
          </BigButton>
        ))}
      </GroupBody>
      <GroupLabel>数据工具</GroupLabel>
    </Group>

    <Group $w={165}>
      <GroupBody $pl={16}>
        <BigButton $w={70}>
          <IconSlot>
            <IconWhatIf />
          </IconSlot>
          <BigText>
            模拟分析
            <br />
            <SmallChev />
          </BigText>
        </BigButton>
        <BigButton $w={71}>
          <IconSlot>
            <IconForecast />
          </IconSlot>
          <BigText>
            预测
            <br />
            工作表
          </BigText>
        </BigButton>
      </GroupBody>
      <GroupLabel>预测</GroupLabel>
    </Group>

    <Group $w={276}>
      <GroupBody $pl={10}>
        <BigButton $w={66}>
          <IconSlot>
            <IconGroup />
          </IconSlot>
          <BigText>
            组合
            <br />
            <SmallChev />
          </BigText>
        </BigButton>
        <BigButton $w={74}>
          <IconSlot>
            <IconUngroup />
          </IconSlot>
          <BigText>
            取消组合
            <br />
            <SmallChev />
          </BigText>
        </BigButton>
        <BigButton $w={84}>
          <IconSlot>
            <IconSubtotal />
          </IconSlot>
          <BigText>分类汇总</BigText>
        </BigButton>
        <TinyCol $ml={3}>
          <IconShowDetail />
          <IconShowDetail minus />
        </TinyCol>
      </GroupBody>
      <GroupLabel $pr={24}>分级显示</GroupLabel>
    </Group>

    <Launcher>
      <svg width="11" height="11" viewBox="0 0 11 11" fill="none">
        <path d="M.5 10V.5H10M3 3l6.500 6.500M9.500 5v4.500H5" stroke="#777" />
      </svg>
    </Launcher>
    <Collapse>
      <svg width="15" height="9" viewBox="0 0 15 9" fill="none">
        <path d="M1 8l6.500-7L14 8" stroke="#666" />
      </svg>
    </Collapse>
  </Ribbon>
);

const Watermarks = () => (
  <Watermark>
    <WmBig $x={0} $y={42} $s={82} $ls={-1}>Bai</WmBig>
    <WmPaw width="100" height="112" viewBox="0 0 100 112" fill="rgba(255,255,255,.72)" stroke="rgba(190,190,190,.8)" strokeWidth="1.500">
      <ellipse cx="13" cy="42" rx="12" ry="20" transform="rotate(-10 13 42)" />
      <ellipse cx="37" cy="19" rx="12" ry="18" />
      <ellipse cx="68" cy="21" rx="12" ry="18" />
      <ellipse cx="88" cy="50" rx="10" ry="19" transform="rotate(-10 88 50)" />
      <path d="M50 46c16 0 24 14 32 26 10 15 6 38-14 38-8 0-12-3-18-3s-12 4-22 3C8 108 4 84 16 70c10-10 16-24 34-24z" />
    </WmPaw>
    <WmThin $x={137} $y={72} $s={38}>du</WmThin>
    <WmBig $x={221} $y={50} $s={58}>经验</WmBig>
    <WmThin $x={0} $y={122} $s={42} $ls={0.3}>jingyan.baidu.com</WmThin>
  </Watermark>
);

export default function App() {
  return (
    <AppWindow>
      <GlobalStyle />
      <TitleBar>
        <Quick>
          <svg width="20" height="20" viewBox="0 0 20 20">
            <path d="M1 1h15l3 3v15H1z" fill="#fff" />
            <rect x="5" y="2" width="9" height="6" fill={GREEN} />
            <rect x="5" y="12" width="10" height="7" fill={GREEN} />
            <rect x="10" y="13.500" width="3" height="5" fill="#fff" />
          </svg>
          <QuickGap $m={22}>
            <svg width="22" height="20" viewBox="0 0 22 20" fill="none">
              <path d="M2 7h11a6 6 0 0 1 0 12h-2" stroke="#fff" strokeWidth="2.500" />
              <path d="M8 1L2 7l6 6" stroke="#fff" strokeWidth="2.500" />
            </svg>
          </QuickGap>
          <QuickGap $m={10}>
            <svg width="8" height="5" viewBox="0 0 8 5" fill="none">
              <path d="M1 1l3 3 3-3" stroke="#fff" />
            </svg>
          </QuickGap>
          <QuickGap $m={16}>
            <svg width="22" height="20" viewBox="0 0 22 20" fill="none">
              <path d="M20 7H9a6 6 0 0 0 0 12h2" stroke="#5f9a7c" strokeWidth="2.500" />
              <path d="M14 1l6 6-6 6" stroke="#5f9a7c" strokeWidth="2.500" />
            </svg>
          </QuickGap>
          <QuickGap $m={10}>
            <svg width="8" height="5" viewBox="0 0 8 5" fill="none">
              <path d="M1 1l3 3 3-3" stroke="#5f9a7c" />
            </svg>
          </QuickGap>
          <QuickGap $m={25}>
            <svg width="9" height="9" viewBox="0 0 9 9">
              <path d="M1 1h7v1H1zM0 4h9L4.500 9z" fill="#fff" />
            </svg>
          </QuickGap>
        </Quick>
        <Title>工作簿1 (version 1).xlsb[已自动还原]   -   Excel Preview</Title>
        <WinButtons>
          <Login>登录</Login>
          <WinBtn>
            <svg width="20" height="19" viewBox="0 0 20 19" fill="none">
              <path d="M1 1h18v17H1zM1 4h18" stroke="#fff" strokeWidth="1.300" />
              <path d="M10 15V8M7 10.500l3-3 3 3" stroke="#fff" strokeWidth="1.500" />
            </svg>
          </WinBtn>
          <WinBtn>
            <svg width="16" height="2" viewBox="0 0 16 2">
              <rect width="16" height="1.500" fill="#fff" />
            </svg>
          </WinBtn>
          <WinBtn>
            <svg width="16" height="16" viewBox="0 0 16 16" fill="none">
              <path d="M4 3V1h11v11h-3" stroke="#fff" strokeWidth="1.200" />
              <rect x="1" y="4" width="11" height="11" stroke="#fff" strokeWidth="1.200" rx="1" />
            </svg>
          </WinBtn>
          <WinBtn>
            <svg width="16" height="16" viewBox="0 0 16 16" fill="none">
              <path d="M1 1l14 14M15 1L1 15" stroke="#fff" strokeWidth="1.500" />
            </svg>
          </WinBtn>
        </WinButtons>
      </TitleBar>

      <TabRow>
        <Tab $mr={7}>文件</Tab>
        <Tab>开始</Tab>
        <Tab>插入</Tab>
        <Tab>页面布局</Tab>
        <Tab>公式</Tab>
        <Tab $active>数据</Tab>
        <Tab>审阅</Tab>
        <Tab>视图</Tab>
        <Tab>帮助</Tab>
        <TellMe>
          <svg width="18" height="27" viewBox="0 0 18 27" fill="none">
            <path d="M6 18c0-4-5-6-5-10a8 8 0 0 1 16 0c0 4-5 6-5 10z" stroke="#fff" strokeWidth="1.300" />
            <path d="M6 21h6M7 24h4" stroke="#fff" strokeWidth="1.300" />
          </svg>
          操作说明搜索
        </TellMe>
        <Share>
          <svg width="23" height="24" viewBox="0 0 23 24" fill="none">
            <circle cx="10" cy="7" r="6" stroke="#fff" strokeWidth="1.200" />
            <path d="M1 23c0-6 3-10 7-10M14 19h9M18.500 14.500v9" stroke="#fff" strokeWidth="1.200" />
          </svg>
          共享
        </Share>
      </TabRow>

      <Ribbons />

      <FormulaBar>
        <NameBox>
          A1
          <svg width="9" height="5" viewBox="0 0 9 5">
            <path d="M0 0h9L4.500 5z" fill="#777" />
          </svg>
        </NameBox>
        <Dots>
          <svg width="4" height="16" viewBox="0 0 4 16" fill="#a0a0a0">
            <rect width="4" height="3" />
            <rect y="6" width="4" height="3" />
            <rect y="12" width="4" height="3" />
          </svg>
        </Dots>
        <FxBox>
          <svg width="18" height="18" viewBox="0 0 18 18" fill="none">
            <path d="M1 1l16 16M17 1L1 17" stroke="#c8c8c8" strokeWidth="2.500" />
          </svg>
          <svg width="20" height="16" viewBox="0 0 20 16" fill="none">
            <path d="M1 8l6 6L19 2" stroke="#c8c8c8" strokeWidth="3" />
          </svg>
          <FxLabel>fx</FxLabel>
        </FxBox>
        <FormulaInput>
          <svg width="12" height="8" viewBox="0 0 12 8" fill="none">
            <path d="M1 1l5 5 5-5" stroke="#777" strokeWidth="2.500" />
          </svg>
        </FormulaInput>
      </FormulaBar>

      <SheetRow>
        <Sheet />
        <VScroll>
          <ScrollBtn>
            <svg width="11" height="6" viewBox="0 0 11 6">
              <path d="M5.500 0L11 6H0z" fill="#777" />
            </svg>
          </ScrollBtn>
          <VTrack>
            <VThumb />
          </VTrack>
          <ScrollBtn>
            <svg width="11" height="6" viewBox="0 0 11 6">
              <path d="M0 0h11L5.500 6z" fill="#777" />
            </svg>
          </ScrollBtn>
        </VScroll>
      </SheetRow>

      <TabsBar>
        <TabNav>
          <svg width="7" height="13" viewBox="0 0 7 13">
            <path d="M7 0v13L0 6.500z" fill="#c2c2c2" />
          </svg>
          <svg width="7" height="13" viewBox="0 0 7 13">
            <path d="M0 0v13l7-6.500z" fill="#c2c2c2" />
          </svg>
        </TabNav>
        <SheetTab $w={93}>Sheet1</SheetTab>
        <SheetTab $w={93}>Sheet2</SheetTab>
        <SheetTab $w={93}>Sheet3</SheetTab>
        <SheetTab $w={93} $active>Sheet4</SheetTab>
        <AddSheet>
          <svg width="22" height="22" viewBox="0 0 22 22" fill="none">
            <circle cx="11" cy="11" r="10" stroke="#8f8f8f" strokeWidth="1.200" />
            <path d="M6 11h10M11 6v10" stroke="#777" strokeWidth="1.400" />
          </svg>
        </AddSheet>
        <HScrollWrap>
          <HDots>
            <svg width="3" height="16" viewBox="0 0 3 16" fill="#a0a0a0">
              <rect width="3" height="3" />
              <rect y="6" width="3" height="3" />
              <rect y="12" width="3" height="3" />
            </svg>
          </HDots>
          <HBtn>
            <svg width="6" height="12" viewBox="0 0 6 12">
              <path d="M6 0v12L0 6z" fill="#666" />
            </svg>
          </HBtn>
          <HTrack>
            <HThumb />
          </HTrack>
          <HBtn>
            <svg width="6" height="12" viewBox="0 0 6 12">
              <path d="M0 0v12l6-6z" fill="#666" />
            </svg>
          </HBtn>
        </HScrollWrap>
      </TabsBar>

      <StatusBar>
        就绪
        <Views>
          <ViewBtn $active>
            <svg width="19" height="19" viewBox="0 0 19 19" fill="none" stroke="#666">
              <path d="M.5 .5h18v18H.5zM6.500 .5v18M12.500 .5v18M.5 6.500h18M.5 12.500h18" />
            </svg>
          </ViewBtn>
          <ViewBtn>
            <svg width="18" height="19" viewBox="0 0 18 19" fill="none" stroke="#666">
              <path d="M.5 .5h17v18H.5zM4.500 3.500h9v12h-9zM7 7h4M7 9.500h4M7 12h4" />
            </svg>
          </ViewBtn>
          <ViewBtn>
            <svg width="18" height="19" viewBox="0 0 18 19" fill="none" stroke="#666">
              <path d="M.5 .5h17v18H.5zM.5 10.500h10M10.500 .5v10M5.500 .5v10" />
            </svg>
          </ViewBtn>
        </Views>
        <Zoomer>
          <svg width="12" height="2" viewBox="0 0 12 2">
            <rect width="12" height="1.500" fill="#555" />
          </svg>
          <SliderTrack>
            <SliderTick />
            <SliderThumb />
          </SliderTrack>
          <svg width="12" height="12" viewBox="0 0 12 12">
            <path d="M0 5.500h12v1.200H0zM5.400 0h1.200v12H5.400z" fill="#555" />
          </svg>
          <Percent>235%</Percent>
        </Zoomer>
      </StatusBar>
      <TaskStrip>
        <TaskSeg $ml={449} $w={73} $c="#c0742c" />
        <TaskSeg $ml={2} $w={66} $c="#4f6469" />
      </TaskStrip>

      <RedFrame />
      <Watermarks />
    </AppWindow>
  );
}
